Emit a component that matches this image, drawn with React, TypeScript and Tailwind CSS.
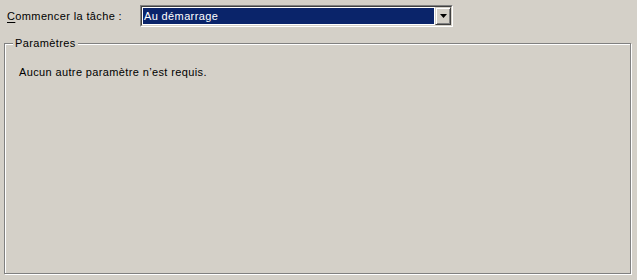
export default function App() {
  return (
    <div
      className="w-[637px] h-[280px] bg-[#d4d0c8] text-[11px] tracking-[0.37px] text-black overflow-hidden"
      style={{ fontFamily: "Tahoma, 'Liberation Sans', Arial, sans-serif" }}
    >
      <div className="flex items-center pt-[5px] pl-[7px]">
        <label className="w-[133px] leading-[22px]">
          <span className="underline underline-offset-2">C</span>ommencer la tâche :
        </label>
        <div className="w-[313px] h-[22px] flex border border-t-[#808080] border-l-[#808080] border-b-white border-r-white">
          <div className="flex flex-1 border border-t-[#404040] border-l-[#404040] border-b-[#d4d0c8] border-r-[#d4d0c8] bg-white">
            <div className="flex-1 m-px bg-[#0a246a] text-white pl-px leading-[16px]">Au démarrage</div>
            <div className="w-[16px] flex items-center justify-center bg-[#d4d0c8] border border-t-[#d4d0c8] border-l-[#d4d0c8] border-b-[#404040] border-r-[#404040] shadow-[inset_1px_1px_0_#fff,inset_-1px_-1px_0_#808080]">
              <svg width="7" height="4" viewBox="0 0 7 4">
                <path d="M0 0h7L3.5 4z" fill="#000" />
              </svg>
            </div>
          </div>
        </div>
      </div>
      <div className="relative ml-[4px] mt-[16px] w-[627px] h-[231px] border border-[#808080] shadow-[inset_1px_1px_0_#fff,1px_1px_0_#fff]">
        <div className="absolute left-[8px] top-[-8px] px-[2px] bg-[#d4d0c8] leading-[14px]">Paramètres</div>
        <p className="pl-[14px] pt-[21px] leading-[14px]">Aucun autre paramètre n’est requis.</p>
      </div>
    </div>
  );
}
